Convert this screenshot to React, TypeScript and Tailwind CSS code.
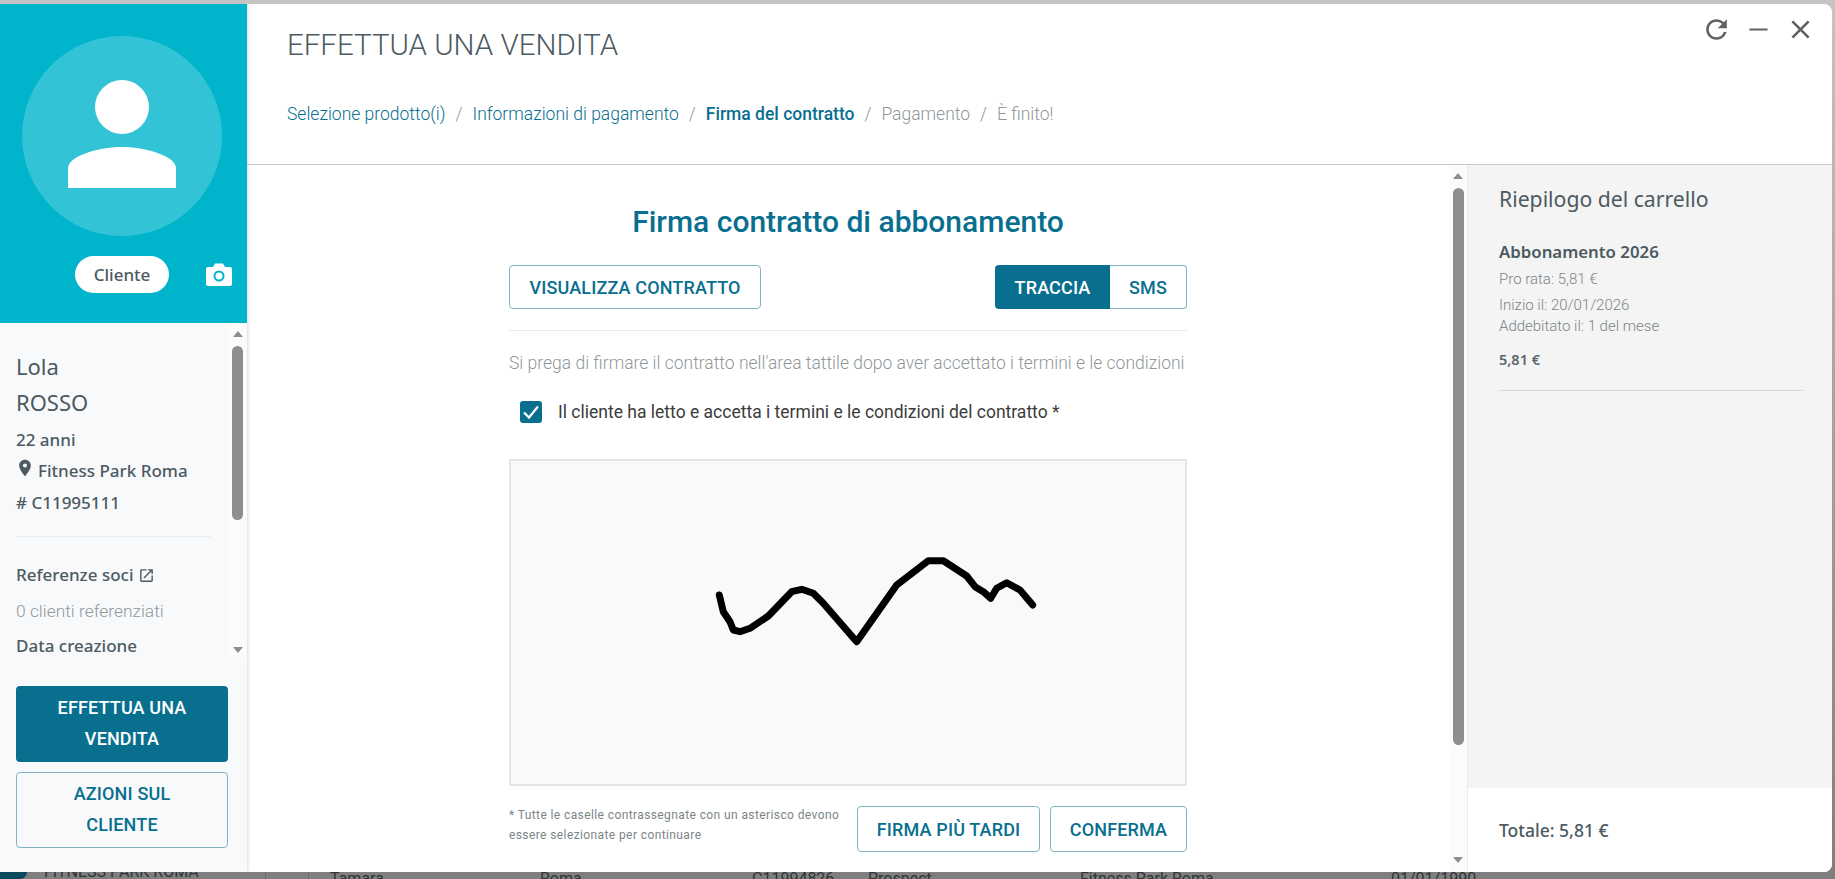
const ROBOTO = "font-['Roboto',sans-serif]";
const HUMAN = "font-['Noto_Sans',sans-serif]";

const STROKE =
  "210.3,136 214.3,152.7 221,162.7 224.3,171 231,172.7 241,169.3 259.3,157 282.7,132.7 292.7,130.3 304.3,134.3 314.3,144.3 347.7,182.7 387.7,126 419.3,101.7 434.3,101.7 457.7,117 466,127.7 474.3,132.7 481.7,139.3 487.7,129.3 497.7,123.7 511,131 523.7,146";

function Icon({ d, className }: { d: string; className: string }) {
  return (
    <svg viewBox="0 0 24 24" fill="currentColor" className={className}>
      <path d={d} />
    </svg>
  );
}

function OutlineButton({ label, className }: { label: string; className: string }) {
  return (
    <button className={`rounded-[4px] border border-[#7fb3c5] bg-white text-[18px] font-medium tracking-[0.15px] text-[#086f8f] ${className}`}>
      {label}
    </button>
  );
}

function ScrollTrack({ className, thumb }: { className: string; thumb: string }) {
  return (
    <div className={`absolute right-0 top-0 bottom-0 flex flex-col items-center bg-[#fbfbfb] ${className}`}>
      <div className="mt-[8px] h-0 w-0 border-x-[5px] border-b-[6px] border-x-transparent border-b-[#8e8e8e]" />
      <div className={`mt-[9px] w-[11px] rounded-full bg-[#8e8e8e] ${thumb}`} />
      <div className="mt-auto mb-[9px] h-0 w-0 border-x-[5px] border-t-[6px] border-x-transparent border-t-[#8e8e8e]" />
    </div>
  );
}

function Sidebar() {
  return (
    <aside className="flex w-[247px] shrink-0 flex-col bg-[#f8f9fb] shadow-[1px_0_3px_rgba(0,0,0,0.15)]">
      <div className="h-[319px] shrink-0 bg-[#00b4cc] pt-[32px]">
        <div className="ml-[22px] flex h-[200px] w-[200px] items-center justify-center rounded-full bg-[#33c3d6]">
          <svg viewBox="0 0 110 108" className="mb-[4px] h-[108px] w-[110px]" fill="#fff">
            <circle cx="55" cy="27" r="27" />
            <path d="M1 108V88c0-11 28-21 54-21s54 10 54 21v20z" />
          </svg>
        </div>
        <div className="mt-[20px] flex items-center pl-[75px]">
          <span className={`flex h-[37px] w-[94px] items-center justify-center rounded-full bg-white text-[17px] font-medium text-[#4c5a61] ${HUMAN}`}>
            Cliente
          </span>
          <svg viewBox="0 0 26 23" className="ml-[37px] h-[23px] w-[26px]">
            <path d="M2 4h5l2-3.500h8l2 3.500h5a2 2 0 0 1 2 2v15a2 2 0 0 1-2 2H2a2 2 0 0 1-2-2V6a2 2 0 0 1 2-2z" fill="#fff" />
            <circle cx="13" cy="13" r="4.500" fill="none" stroke="#00b4cc" strokeWidth="2" />
          </svg>
        </div>
      </div>

      <div className="relative h-[339px] shrink-0 overflow-hidden pl-[16px] pt-[25px]">
        <div className={`w-[195px] text-[#4c5a61] ${HUMAN}`}>
          <p className="text-[22px] leading-[36px]">Lola</p>
          <p className="text-[22px] leading-[36px]">ROSSO</p>
          <p className="mt-[4px] text-[17px] font-medium leading-[32px]">22 anni</p>
          <p className="-mt-[1px] flex items-center whitespace-nowrap text-[17px] font-medium leading-[32px]">
            <Icon
              d="M12 2C8.130 2 5 5.130 5 9c0 5.250 7 13 7 13s7-7.750 7-13c0-3.870-3.130-7-7-7zm0 9.500a2.500 2.500 0 0 1 0-5 2.500 2.500 0 0 1 0 5z"
              className="-ml-[1px] mr-[3px] mb-[6px] h-[20px] w-[20px] shrink-0"
            />
            Fitness Park Roma
          </p>
          <p className="text-[17px] font-medium leading-[32px]"># C11995111</p>
          <div className="mt-[17px] h-px w-[195px] bg-[#e9ecef]" />
          <p className="mt-[26px] flex items-center gap-[5px] text-[17px] font-medium leading-[24px]">
            Referenze soci
            <Icon
              d="M19 19H5V5h7V3H5a2 2 0 0 0-2 2v14a2 2 0 0 0 2 2h14c1.100 0 2-.9 2-2v-7h-2v7zM14 3v2h3.590l-9.830 9.830 1.410 1.410L19 6.410V10h2V3h-7z"
              className="h-[17px] w-[17px]"
            />
          </p>
          <p className={`mt-[12px] whitespace-nowrap text-[17.400px] font-light leading-[24px] text-[#8f979b] ${ROBOTO}`}>
            0 clienti referenziati
          </p>
          <p className="mt-[11px] text-[17px] font-medium leading-[24px]">Data creazione</p>
        </div>
        <ScrollTrack className="w-[19px]" thumb="h-[174px]" />
      </div>

      <div className={`flex flex-col gap-[10px] px-[16px] pt-[24px] text-[18px] font-medium leading-[31px] tracking-[0.15px] ${ROBOTO}`}>
        <button className="h-[76px] w-[212px] rounded-[4px] bg-[#086f8f] pb-[2px] text-white">
          EFFETTUA UNA<br />VENDITA
        </button>
        <button className="h-[76px] w-[212px] rounded-[4px] border border-[#7fb3c5] pb-[2px] text-[#086f8f]">
          AZIONI SUL<br />CLIENTE
        </button>
      </div>
    </aside>
  );
}

function Header() {
  return (
    <header className={`relative h-[161px] shrink-0 border-b border-[#c8c8c8] pl-[40px] ${ROBOTO}`}>
      <h1 className="pt-[24px] text-[29.500px] font-light leading-[34px] text-[#4c5a61]">EFFETTUA UNA VENDITA</h1>
      <nav className="mt-[40px] flex items-center gap-[10px] text-[17.500px] font-light leading-[24px]">
        <span className="text-[#086f8f]">Selezione prodotto(i)</span>
        <span className="text-[#8f979b]">/</span>
        <span className="text-[#086f8f]">Informazioni di pagamento</span>
        <span className="text-[#8f979b]">/</span>
        <span className="font-medium text-[#086f8f]">Firma del contratto</span>
        <span className="text-[#8f979b]">/</span>
        <span className="text-[#8f979b]">Pagamento</span>
        <span className="text-[#8f979b]">/</span>
        <span className="text-[#8f979b]">È finito!</span>
      </nav>
      <div className="absolute right-[16px] top-[10px] flex items-center gap-[11px] text-[#616161]">
        <Icon
          d="M17.650 6.350A7.958 7.958 0 0 0 12 4c-4.420 0-7.990 3.580-7.990 8s3.570 8 7.990 8c3.730 0 6.840-2.550 7.730-6h-2.080A5.990 5.990 0 0 1 12 18c-3.310 0-6-2.690-6-6s2.690-6 6-6c1.660 0 3.140.69 4.220 1.780L13 11h7V4l-2.350 2.350z"
          className="h-[31px] w-[31px]"
        />
        <Icon d="M19 12.800H5v-1.600h14v1.600z" className="h-[31px] w-[31px]" />
        <Icon
          d="M19 6.410 17.590 5 12 10.590 6.410 5 5 6.410 10.590 12 5 17.590 6.410 19 12 13.410 17.590 19 19 17.590 13.410 12z"
          className="h-[31px] w-[31px]"
        />
      </div>
    </header>
  );
}

function ContractPanel() {
  return (
    <main className={`relative flex-1 ${ROBOTO}`}>
      <div className="ml-[262px] w-[678px]">
        <h2 className="pt-[39px] text-center text-[30px] font-medium leading-[36px] text-[#086f8f]">
          Firma contratto di abbonamento
        </h2>
        <div className="mt-[25px] flex items-center justify-between border-b border-[#e9e9e9] pb-[21px]">
          <OutlineButton label="VISUALIZZA CONTRATTO" className="h-[44px] w-[252px]" />
          <div className="flex h-[44px] w-[192px] text-[18px] font-medium tracking-[0.15px]">
            <span className="flex w-[115px] items-center justify-center rounded-l-[4px] bg-[#086f8f] text-white">TRACCIA</span>
            <span className="flex flex-1 items-center justify-center rounded-r-[4px] border border-l-0 border-[#7fb3c5] text-[#086f8f]">SMS</span>
          </div>
        </div>
        <p className="mt-[20px] whitespace-nowrap text-[17.500px] font-light leading-[24px] text-[#8f979b]">
          Si prega di firmare il contratto nell'area tattile dopo aver accettato i termini e le condizioni
        </p>
        <label className="mt-[25px] flex items-center pl-[11px]">
          <span className="flex h-[22px] w-[22px] items-center justify-center rounded-[3px] bg-[#086f8f]">
            <svg viewBox="0 0 22 22" className="h-[22px] w-[22px]" fill="none" stroke="#fff" strokeWidth="2.200">
              <path d="M4 11.500l5 5 9-11" />
            </svg>
          </span>
          <span className="ml-[16px] text-[17.500px] leading-[24px] text-[#3c3c3c]">
            Il cliente ha letto e accetta i termini e le condizioni del contratto *
          </span>
        </label>
        <div className="mt-[35px] h-[327px] rounded-[2px] border-2 border-[#e5e5e5] bg-[#f9f9f9]">
          <svg viewBox="0 0 674 323" className="h-full w-full" fill="none">
            <polyline points={STROKE} stroke="#000" strokeWidth="7" strokeLinecap="round" strokeLinejoin="round" transform="translate(-2 -2)" />
          </svg>
        </div>
        <div className="mt-[20px] flex items-start">
          <p className="-mt-[1px] w-[348px] text-[12px] leading-[20px] tracking-[0.4px] text-[#7b8589]">
            * Tutte le caselle contrassegnate con un asterisco devono essere selezionate per continuare
          </p>
          <OutlineButton label="FIRMA PIÙ TARDI" className="h-[46px] w-[183px]" />
          <OutlineButton label="CONFERMA" className="ml-[10px] h-[46px] w-[137px]" />
        </div>
      </div>
      <ScrollTrack className="w-[18px]" thumb="h-[557px]" />
    </main>
  );
}

function CartSummary() {
  return (
    <section className={`flex w-[365px] shrink-0 flex-col border-l border-[#ececec] text-[#4c5a61] ${HUMAN}`}>
      <div className="flex-1 bg-[#f4f4f4] px-[31px] pt-[20px]">
        <h3 className="text-[21.200px] leading-[28px]">Riepilogo del carrello</h3>
        <p className="mt-[27px] text-[16.800px] font-semibold leading-[24px]">Abbonamento 2026</p>
        <div className={`${ROBOTO} text-[15px] font-light text-[#7b8589]`}>
          <p className="mt-[5px] leading-[20px]">Pro rata: 5,81 €</p>
          <p className="mt-[6px] leading-[21px]">Inizio il: 20/01/2026</p>
          <p className="leading-[21px]">Addebitato il: 1 del mese</p>
        </div>
        <p className="mt-[12px] text-[14.500px] font-semibold leading-[20px] text-[#5b676d]">5,81 €</p>
        <div className="mt-[21px] h-px w-[304px] bg-[#d8d8d8]" />
      </div>
      <div className="flex h-[84px] items-center bg-white pl-[31px] text-[17.500px] font-medium">
        Totale: 5,81 €
      </div>
    </section>
  );
}

// the page behind the modal, only a sliver of its last table row shows
function BackdropRow() {
  return (
    <div className={`flex h-[7px] items-start overflow-hidden whitespace-nowrap bg-[#7f7f7f] text-[16px] leading-[20px] text-[#2f3437] ${ROBOTO}`}>
      <div className="h-[7px] w-[27px] rounded-br-[10px] bg-[#0a4a5e]" />
      <div className="ml-[17px] -mt-[10px] w-[221px]">FITNESS PARK ROMA</div>
      <div className="h-[7px] w-[44px] border-x border-[#6c6c6c]" />
      <div className="-mt-[3px] ml-[21px] w-[210px]">Tamara</div>
      <div className="-mt-[3px] w-[212px]">Roma</div>
      <div className="-mt-[3px] w-[116px]">C11994826</div>
      <div className="-mt-[3px] w-[212px]">Prospect</div>
      <div className="-mt-[3px] w-[311px]">Fitness Park Roma</div>
      <div className="-mt-[3px]">01/01/1990</div>
    </div>
  );
}

export default function App() {
  return (
    <div className="flex h-screen w-screen flex-col overflow-hidden bg-gradient-to-b from-[#c4c4c4] to-[#7f7f7f]">
      <div className="h-[4px] shrink-0 bg-[#c4c4c4]" />
      <div className="mr-[3px] flex h-[868px] shrink-0 overflow-hidden rounded-r-[8px] bg-white">
        <Sidebar />
        <div className="flex min-w-0 flex-1 flex-col">
          <Header />
          <div className="flex min-h-0 flex-1">
            <ContractPanel />
            <CartSummary />
          </div>
        </div>
      </div>
      <BackdropRow />
    </div>
  );
}
